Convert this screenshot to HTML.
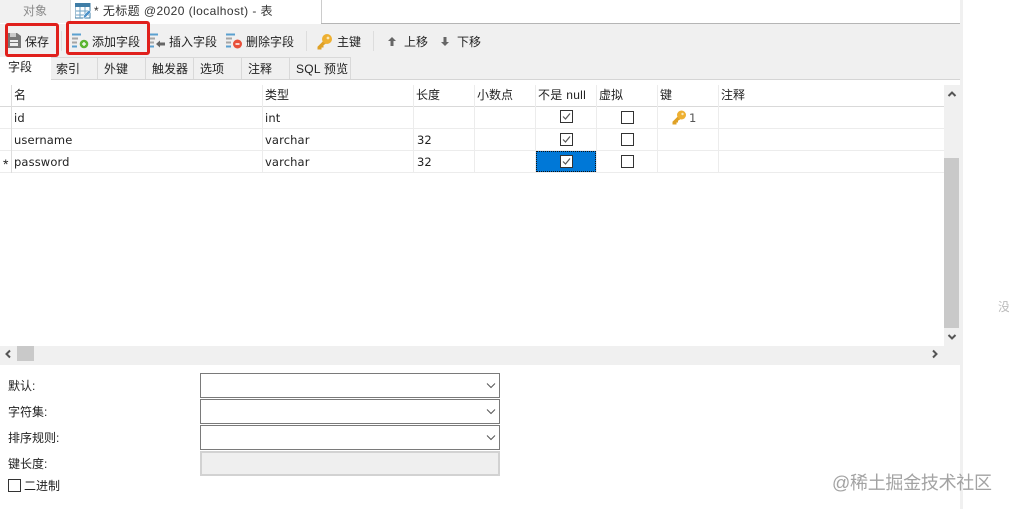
<!DOCTYPE html>
<html><head><meta charset="utf-8">
<style>
html,body{margin:0;padding:0;background:#fff}
body{width:1009px;height:509px;position:relative;overflow:hidden;font-family:"Liberation Sans","Noto Sans CJK SC",sans-serif;font-size:12px;color:#222}
.a{position:absolute}
.t{position:absolute;white-space:nowrap;line-height:16px;font-size:12px}
.m{letter-spacing:.12px;font-family:"DejaVu Sans","Noto Sans CJK SC",sans-serif;font-size:11.5px}
.vl{position:absolute;width:1px;background:#ececec;top:85px;height:88px}
.hl{position:absolute;left:0;width:944px;height:1px;background:#ececec}
.cb{position:absolute;width:11px;height:11px;border:1px solid #333;background:#fff}
.red{position:absolute;border:3px solid #e0201c;border-radius:3px;box-sizing:border-box}
.sel{position:absolute;left:200px;width:300px;height:25px;box-sizing:border-box;border:1px solid #7a7a7a;background:#fff}
.tab{position:absolute;top:57px;height:22px;box-sizing:border-box;background:#f0f0f0;border-right:1px solid #d9d9d9;border-top:1px solid #d9d9d9;font-size:12px;line-height:22px;padding-left:6px;white-space:nowrap}
</style></head><body>

<!-- top tabs -->
<div class="a" style="left:0;top:0;width:70px;height:23px;background:#f1f1f1"></div>
<div class="t" style="left:23px;top:3px;color:#8a8a8a">对象</div>
<div class="a" style="left:70px;top:0;width:1px;height:23px;background:#ddd"></div>
<div class="a" style="left:321px;top:0;width:1px;height:23px;background:#ccc"></div>
<div class="a" style="left:321px;top:23px;width:639px;height:1px;background:#b5b5b5"></div>
<svg class="a" style="left:75px;top:3px" width="17" height="18" viewBox="0 0 17 18">
<rect x="0" y="0" width="15" height="15" fill="#fff" stroke="#3f7da6" stroke-width="1"/>
<rect x="0" y="0" width="15" height="4" fill="#3f7da6"/>
<path d="M1 8H14M1 12H14M5 4V15M10 4V15" stroke="#6fa3c4" stroke-width="1"/>
<path d="M8 16L9 12L14 7L16 9L11 14Z" fill="#4f93c9" stroke="#fff" stroke-width=".5"/>
</svg>
<div class="t" style="left:94px;top:3px;color:#333;letter-spacing:.42px">* 无标题 @2020 (localhost) - 表</div>

<!-- toolbar -->
<div class="a" style="left:0;top:24px;width:960px;height:55px;background:#f0f0f0"></div>
<svg class="a" style="left:7px;top:33px" width="14" height="16" viewBox="0 0 14 16">
<path d="M0 0H10L14 3V15H0Z" fill="#777"/><rect x="3" y="0" width="6" height="4" fill="#c9c9c9"/>
<rect x="3" y="7" width="8" height="2" fill="#eee"/><rect x="3" y="10" width="8" height="3" fill="#eee"/>
</svg>
<div class="t" style="left:25px;top:34px">保存</div>
<div class="a" style="left:61px;top:31px;width:1px;height:20px;background:#ddd"></div>
<svg class="a" style="left:72px;top:33px" width="18" height="17" viewBox="0 0 18 17">
<path d="M0 1.500H9" stroke="#5aa0cf" stroke-width="2"/><path d="M0 5.500H6M0 9.500H5" stroke="#a5a5a5" stroke-width="2"/><path d="M0 13.500H5" stroke="#5aa0cf" stroke-width="2"/>
<circle cx="12" cy="11" r="4.300" fill="#5cb531"/><path d="M10 11H14M12 9V13" stroke="#fff" stroke-width="1.300"/>
</svg>
<div class="t" style="left:92px;top:34px">添加字段</div>
<svg class="a" style="left:149px;top:33px" width="18" height="17" viewBox="0 0 18 17">
<path d="M0 1.500H9" stroke="#5aa0cf" stroke-width="2"/><path d="M0 5.500H6M0 9.500H5" stroke="#a5a5a5" stroke-width="2"/><path d="M0 13.500H5" stroke="#5aa0cf" stroke-width="2"/>
<path d="M7 11L11 7.500V9.500H16V12.500H11V14.500Z" fill="#666"/>
</svg>
<div class="t" style="left:169px;top:34px">插入字段</div>
<svg class="a" style="left:226px;top:33px" width="18" height="17" viewBox="0 0 18 17">
<path d="M0 1.500H9" stroke="#5aa0cf" stroke-width="2"/><path d="M0 5.500H6M0 9.500H5" stroke="#a5a5a5" stroke-width="2"/><path d="M0 13.500H5" stroke="#5aa0cf" stroke-width="2"/>
<circle cx="11.500" cy="11" r="4.500" fill="#e8503a"/><path d="M9.500 11H13.500" stroke="#fff" stroke-width="1.500"/>
</svg>
<div class="t" style="left:246px;top:34px">删除字段</div>
<div class="a" style="left:306px;top:31px;width:1px;height:20px;background:#ddd"></div>
<svg class="a" style="left:317px;top:33px" width="16" height="17" viewBox="0 0 16 17">
<path d="M7 8L1 14V16H4V14H6V12L9 10" fill="#dfa126" stroke="#dfa126"/>
<circle cx="10" cy="6" r="5" fill="#eeb032"/><circle cx="11" cy="5" r="1.400" fill="#fbe9b8"/>
</svg>
<div class="t" style="left:337px;top:34px">主键</div>
<div class="a" style="left:373px;top:31px;width:1px;height:20px;background:#ddd"></div>
<svg class="a" style="left:387px;top:36px" width="10" height="11" viewBox="0 0 10 11"><path d="M5 1L9 5H6.500V10H3.500V5H1Z" fill="#666"/></svg>
<div class="t" style="left:404px;top:34px">上移</div>
<svg class="a" style="left:440px;top:36px" width="10" height="11" viewBox="0 0 10 11"><path d="M5 10L1 6H3.500V1H6.500V6H9Z" fill="#666"/></svg>
<div class="t" style="left:457px;top:34px">下移</div>

<!-- sub tabs -->
<div class="tab" style="left:50px;width:48px">索引</div>
<div class="tab" style="left:98px;width:48px">外键</div>
<div class="tab" style="left:146px;width:48px">触发器</div>
<div class="tab" style="left:194px;width:48px">选项</div>
<div class="tab" style="left:242px;width:48px">注释</div>
<div class="tab" style="left:290px;width:61px;letter-spacing:.25px">SQL 预览</div>
<div class="a" style="left:51px;top:79px;width:909px;height:1px;background:#d5d5d5"></div>
<div class="a" style="left:0;top:57px;width:51px;height:23px;background:#fff"></div>
<div class="t" style="left:8px;top:59px">字段</div>

<!-- grid -->
<div class="a" style="left:0;top:106px;width:944px;height:1px;background:#d9d9d9"></div>
<div class="hl" style="top:128px"></div>
<div class="hl" style="top:150px"></div>
<div class="hl" style="top:172px"></div>
<div class="vl" style="left:11px;background:#ddd"></div>
<div class="vl" style="left:262px"></div>
<div class="vl" style="left:413px"></div>
<div class="vl" style="left:474px"></div>
<div class="vl" style="left:535px"></div>
<div class="vl" style="left:596px"></div>
<div class="vl" style="left:657px"></div>
<div class="vl" style="left:718px"></div>

<div class="t" style="left:14px;top:87px">名</div>
<div class="t" style="left:265px;top:87px">类型</div>
<div class="t" style="left:416px;top:87px">长度</div>
<div class="t" style="left:477px;top:87px">小数点</div>
<div class="t" style="left:538px;top:87px;letter-spacing:.3px">不是 null</div>
<div class="t" style="left:599px;top:87px">虚拟</div>
<div class="t" style="left:660px;top:87px">键</div>
<div class="t" style="left:721px;top:87px">注释</div>

<div class="t m" style="left:14px;top:110px">id</div>
<div class="t m" style="left:265px;top:110px">int</div>
<div class="t m" style="left:14px;top:132px">username</div>
<div class="t m" style="left:265px;top:132px">varchar</div>
<div class="t m" style="left:417px;top:132px">32</div>
<div class="t" style="left:3px;top:156px;font-size:14px">*</div>
<div class="t m" style="left:14px;top:154px">password</div>
<div class="t m" style="left:265px;top:154px">varchar</div>
<div class="t m" style="left:417px;top:154px">32</div>

<!-- selected cell -->
<div class="a" style="left:536px;top:151px;width:60px;height:21px;box-sizing:border-box;background:#0078d7;border:1px dotted #111"></div>

<svg class="a" style="left:560px;top:110px" width="13" height="13" viewBox="0 0 13 13"><rect x=".5" y=".5" width="12" height="12" fill="#fff" stroke="#333"/><path d="M3 6.500L5.500 9L10 3.500" fill="none" stroke="#555" stroke-width="1.200"/></svg>
<svg class="a" style="left:560px;top:133px" width="13" height="13" viewBox="0 0 13 13"><rect x=".5" y=".5" width="12" height="12" fill="#fff" stroke="#333"/><path d="M3 6.500L5.500 9L10 3.500" fill="none" stroke="#555" stroke-width="1.200"/></svg>
<svg class="a" style="left:560px;top:155px" width="13" height="13" viewBox="0 0 13 13"><rect x=".5" y=".5" width="12" height="12" fill="#fff" stroke="#333"/><path d="M3 6.500L5.500 9L10 3.500" fill="none" stroke="#555" stroke-width="1.200"/></svg>
<div class="cb" style="left:621px;top:111px"></div>
<div class="cb" style="left:621px;top:133px"></div>
<div class="cb" style="left:621px;top:155px"></div>
<svg class="a" style="left:672px;top:110px" width="15" height="15" viewBox="0 0 15 15">
<path d="M6 7L1 12V14H4V12H5.500V10.500L8 9" fill="#dfa126" stroke="#dfa126"/>
<circle cx="9.500" cy="5" r="4.500" fill="#eeb032"/><circle cx="10.500" cy="4" r="1.200" fill="#fbe9b8"/>
</svg>
<div class="t m" style="left:689px;top:110px;color:#555">1</div>

<!-- v scrollbar -->
<div class="a" style="left:944px;top:85px;width:16px;height:261px;background:#f0f0f0"></div>
<div class="a" style="left:944px;top:158px;width:15px;height:170px;background:#c9c9c9"></div>
<svg class="a" style="left:947px;top:90px" width="10" height="8" viewBox="0 0 10 8"><path d="M1.500 6L5 2.500L8.500 6" fill="none" stroke="#555" stroke-width="2"/></svg>
<svg class="a" style="left:947px;top:333px" width="10" height="8" viewBox="0 0 10 8"><path d="M1.500 2L5 5.500L8.500 2" fill="none" stroke="#555" stroke-width="2"/></svg>

<!-- h scrollbar -->
<div class="a" style="left:0;top:346px;width:960px;height:19px;background:#f0f0f0"></div>
<div class="a" style="left:17px;top:346px;width:17px;height:15px;background:#c9c9c9"></div>
<svg class="a" style="left:4px;top:349px" width="8" height="10" viewBox="0 0 8 10"><path d="M6 1.500L2.500 5L6 8.500" fill="none" stroke="#555" stroke-width="2"/></svg>
<svg class="a" style="left:931px;top:349px" width="8" height="10" viewBox="0 0 8 10"><path d="M2 1.500L5.500 5L2 8.500" fill="none" stroke="#555" stroke-width="2"/></svg>

<!-- right divider -->
<div class="a" style="left:960px;top:0;width:3px;height:509px;background:#f0f0f0"></div>
<div class="t" style="left:998px;top:299px;color:#bbb">没</div>

<!-- form -->
<div class="t" style="left:8px;top:378px">默认:</div>
<div class="t" style="left:8px;top:404px">字符集:</div>
<div class="t" style="left:8px;top:430px">排序规则:</div>
<div class="t" style="left:8px;top:456px">键长度:</div>
<div class="sel" style="top:373px"></div>
<div class="sel" style="top:399px"></div>
<div class="sel" style="top:425px"></div>
<div class="sel" style="top:451px;border:2px solid #d2d2d2;background:#efefef"></div>
<svg class="a" style="left:486px;top:382px" width="10" height="7" viewBox="0 0 10 7"><path d="M1 1.500L5 5.500L9 1.500" fill="none" stroke="#555" stroke-width="1"/></svg>
<svg class="a" style="left:486px;top:408px" width="10" height="7" viewBox="0 0 10 7"><path d="M1 1.500L5 5.500L9 1.500" fill="none" stroke="#555" stroke-width="1"/></svg>
<svg class="a" style="left:486px;top:434px" width="10" height="7" viewBox="0 0 10 7"><path d="M1 1.500L5 5.500L9 1.500" fill="none" stroke="#555" stroke-width="1"/></svg>
<div class="cb" style="left:8px;top:479px"></div>
<div class="t" style="left:24px;top:478px">二进制</div>

<!-- red highlight boxes -->
<div class="red" style="left:5px;top:23px;width:54px;height:34px"></div>
<div class="red" style="left:66px;top:21px;width:84px;height:34px"></div>

<!-- watermark -->
<div class="t" style="left:832px;top:472px;font-size:18px;line-height:22px;color:#a3a3a3;letter-spacing:-.28px">@稀土掘金技术社区</div>
</body></html>
